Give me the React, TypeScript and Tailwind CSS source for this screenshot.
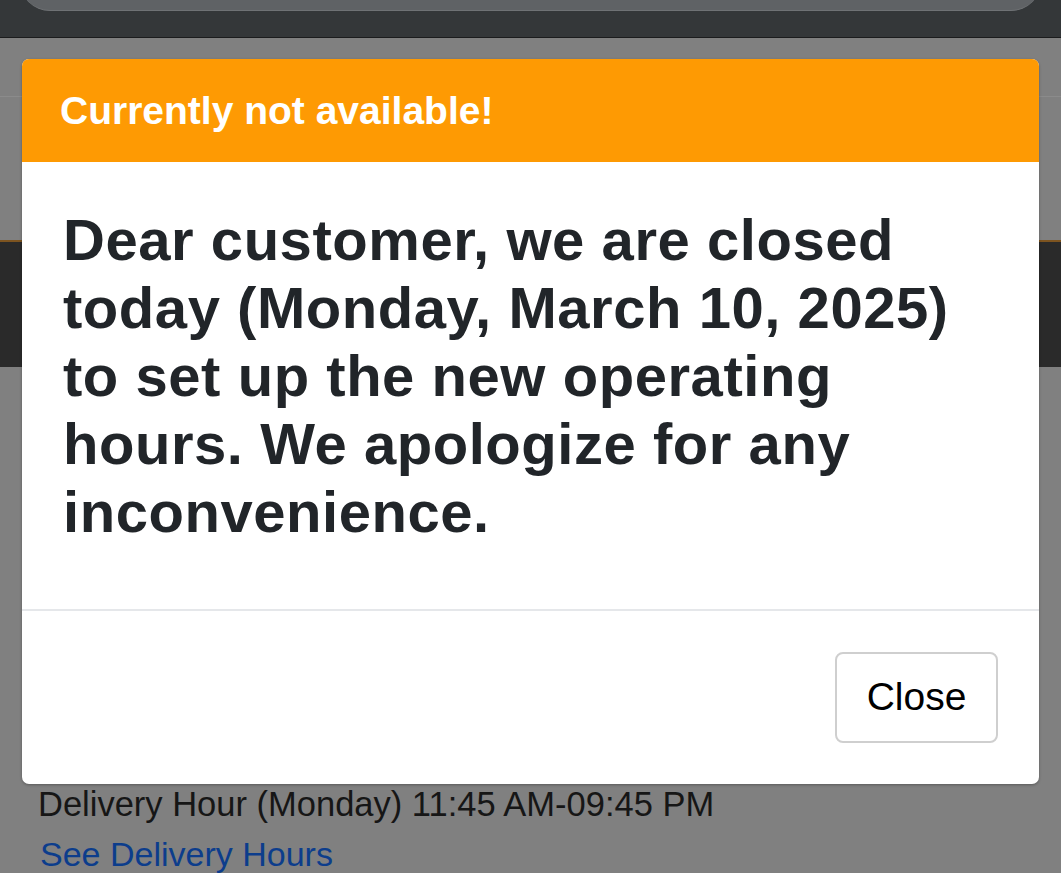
export default function App() {
  return (
    <div className="relative w-[1061px] h-[873px] overflow-hidden bg-[#808080] font-['Liberation_Sans',Arial,sans-serif]">
      <header className="h-[38px] bg-[#343739] border-b border-[#1b1c1d] px-[20px] overflow-hidden">
        <div className="h-[60px] -mt-[49px] rounded-[40px] bg-[#5f6265] border-b border-[#6f7275]" />
      </header>
      <div className="h-[59px] border-b border-[#8b8b8b]" />
      <div className="h-[143px]" />
      <div className="h-[127px] bg-[#2a2a2a] border-t-2 border-[#7d5420]" />
      <div className="pt-[418px] pl-[38px]">
        <p className="text-[34.5px] leading-[38px] text-[#161616]">Delivery Hour (Monday) 11:45 AM-09:45 PM</p>
        <a className="block mt-[12px] ml-[2px] text-[34px] leading-[38px] text-[#0c3d8c]">See Delivery Hours</a>
      </div>

      <div className="absolute left-[22px] top-[59px] w-[1017px] h-[725px] rounded-[7px] bg-white overflow-hidden flex flex-col shadow-[0_1px_3px_rgba(0,0,0,0.3)]">
        <div className="h-[103px] shrink-0 bg-[#fe9a03] px-[38px] flex items-center">
          <h5 className="text-[39px] font-bold text-white pt-[2px]">Currently not available!</h5>
        </div>
        <div className="px-[41px] pt-[44px] pb-[63px] border-b-2 border-[#e5e7ea]">
          <p className="text-[58px] leading-[68px] font-bold text-[#212529] tracking-[0.55px]">
            Dear customer, we are closed today (Monday, March 10, 2025) to set up the new operating hours. We apologize for any inconvenience.
          </p>
        </div>
        <div className="flex-1 flex items-center justify-end px-[41px]">
          <button className="w-[163px] h-[91px] rounded-[8px] border-2 border-[#cfcfcf] bg-white text-[39px] text-black">
            Close
          </button>
        </div>
      </div>
    </div>
  );
}
